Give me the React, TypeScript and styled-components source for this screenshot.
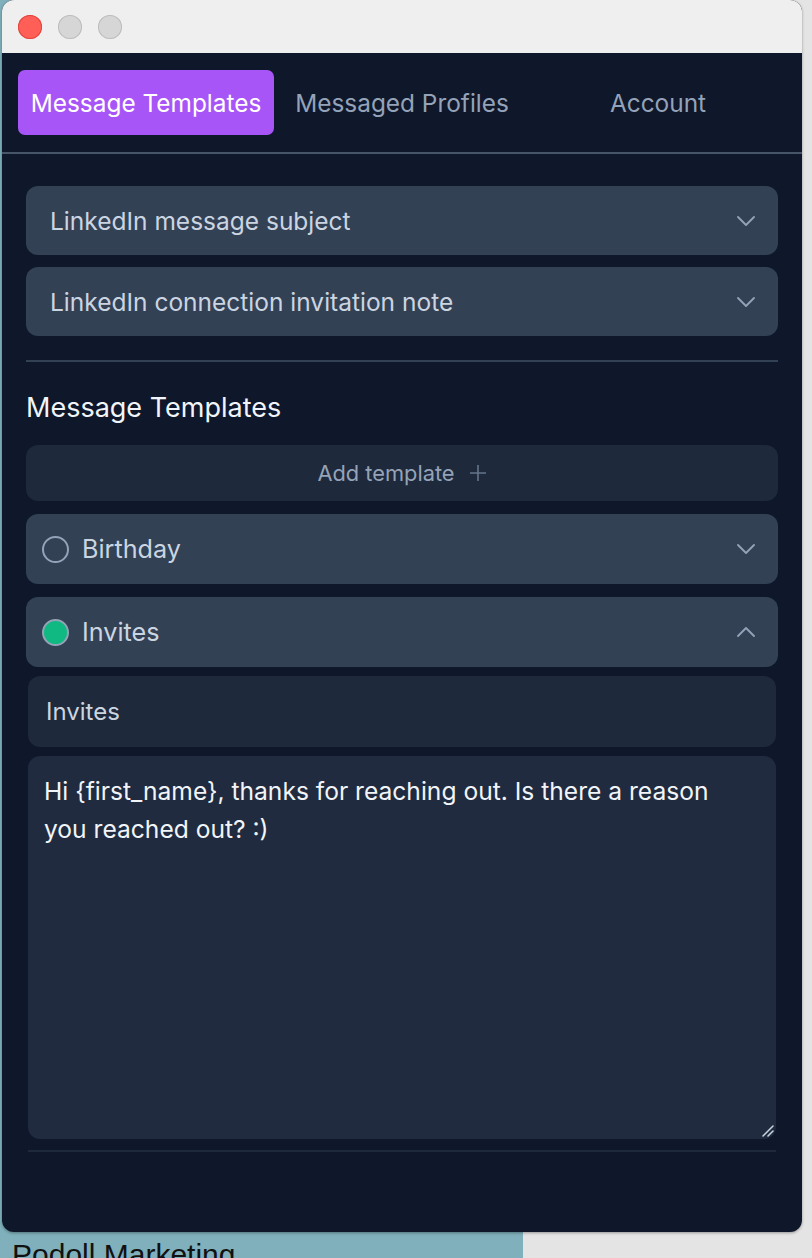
import React from "react";
import styled, { createGlobalStyle } from "styled-components";

const GlobalStyle = createGlobalStyle`
  html, body {
    margin: 0;
    padding: 0;
  }
  body {
    font-family: Inter, "Noto Sans", sans-serif;
    background: #e6e6e6;
  }
`;

const Desktop = styled.div`
  position: relative;
  width: 812px;
  height: 1258px;
  overflow: hidden;
  background: linear-gradient(
    to right,
    #7fb0bb 0,
    #7fb0bb 523px,
    #e4e4e4 523px,
    #e4e4e4 100%
  );
`;

const DesktopLabel = styled.div`
  position: absolute;
  left: 12px;
  top: 1238px;
  font-family: "Liberation Sans", Arial, sans-serif;
  font-size: 30px;
  line-height: 34px;
  color: #111;
  z-index: 0;
`;

const Window = styled.div`
  position: relative;
  z-index: 1;
  margin-left: 2px;
  width: 800px;
  height: 1232px;
  border-radius: 12px;
  overflow: hidden;
  background: #0f172a;
  display: flex;
  flex-direction: column;
  box-shadow: 0 1px 3px rgba(0, 0, 0, 0.35);
`;

const TitleBar = styled.div`
  height: 53px;
  flex-shrink: 0;
  background: #efefef;
  display: flex;
  align-items: center;
  gap: 16px;
  padding-left: 16px;
  box-sizing: border-box;
`;

const Light = styled.span<{ $color: string; $edge: string }>`
  width: 24px;
  height: 24px;
  border-radius: 50%;
  background: ${(p) => p.$color};
  box-shadow: inset 0 0 0 1px ${(p) => p.$edge};
`;

const TabBar = styled.div`
  display: grid;
  grid-template-columns: repeat(3, 1fr);
  padding: 17px 16px;
  border-bottom: 2px solid #475569;
`;

const Tab = styled.div<{ $active?: boolean }>`
  height: 65px;
  display: flex;
  align-items: center;
  justify-content: center;
  border-radius: 7px;
  font-size: 24.4px;
  background: ${(p) => (p.$active ? "#a855f7" : "transparent")};
  color: ${(p) => (p.$active ? "#ffffff" : "#94a3b8")};
`;

const Content = styled.div`
  padding: 32px 24px 0;
  display: flex;
  flex-direction: column;
`;

const Stack = styled.div<{ $gap: number; $top?: number }>`
  display: flex;
  flex-direction: column;
  gap: ${(p) => p.$gap}px;
  margin-top: ${(p) => p.$top ?? 0}px;
`;

const Card = styled.div`
  height: 69px;
  display: flex;
  align-items: center;
  justify-content: space-between;
  padding: 0 23px 0 24px;
  box-sizing: border-box;
  background: #334155;
  border-radius: 12px;
  color: #cbd5e1;
  font-size: 24.5px;
`;

const TemplateCard = styled(Card)`
  height: 70px;
  padding-left: 16px;
  font-size: 25.2px;
`;

const Divider = styled.div`
  height: 2px;
  background: #334155;
  margin-top: 24px;
`;

const Heading = styled.div`
  margin-top: 30px;
  font-size: 27px;
  line-height: 32px;
  color: #f1f5f9;
`;

const AddButton = styled.div`
  margin-top: 21px;
  height: 56px;
  display: flex;
  align-items: center;
  justify-content: center;
  gap: 14px;
  background: #1e293b;
  border-radius: 12px;
  color: #94a3b8;
  font-size: 21.8px;
`;

const Left = styled.div`
  display: flex;
  align-items: center;
  gap: 13px;
`;

const Radio = styled.span<{ $on?: boolean }>`
  width: 27px;
  height: 27px;
  border-radius: 50%;
  box-sizing: border-box;
  border: 2px solid #94a3b8;
  background: ${(p) => (p.$on ? "#10b981" : "transparent")};
`;

const Editor = styled.div`
  display: flex;
  flex-direction: column;
  gap: 9px;
  padding: 9px 2px 0;
`;

const TitleField = styled.div`
  height: 71px;
  display: flex;
  align-items: center;
  padding: 0 18px;
  background: #1e293b;
  border-radius: 12px;
  color: #cbd5e1;
  font-size: 24px;
`;

const BodyField = styled.div`
  position: relative;
  height: 383px;
  box-sizing: border-box;
  padding: 16px 44px 16px 16px;
  background: #212b3f;
  border-radius: 12px;
  color: #f1f5f9;
  font-size: 24.6px;
  line-height: 38px;
`;

const Grip = styled.svg`
  position: absolute;
  right: 2px;
  bottom: 2px;
`;

const EditorRule = styled.div`
  height: 2px;
  background: #1e293b;
  margin-top: 2px;
`;

const Chevron = ({ up }: { up?: boolean }) => (
  <svg width="18" height="10" viewBox="0 0 18 10" fill="none">
    <polyline
      points={up ? "1,9 9,1 17,9" : "1,1 9,9 17,1"}
      stroke="#94a3b8"
      strokeWidth="1.8"
      strokeLinecap="round"
      strokeLinejoin="round"
    />
  </svg>
);

const Plus = () => (
  <svg width="18" height="18" viewBox="0 0 18 18" fill="none">
    <path d="M9 1v16M1 9h16" stroke="#64748b" strokeWidth="1.6" />
  </svg>
);

const message =
  "Hi {first_name}, thanks for reaching out. Is there a reason you reached out? :)";

export default function App() {
  return (
    <Desktop>
      <GlobalStyle />
      <Window>
        <TitleBar>
          <Light $color="#ff5f57" $edge="#e0443e" />
          <Light $color="#d6d6d6" $edge="#bdbdbd" />
          <Light $color="#d6d6d6" $edge="#bdbdbd" />
        </TitleBar>
        <TabBar>
          <Tab $active>Message Templates</Tab>
          <Tab>Messaged Profiles</Tab>
          <Tab>Account</Tab>
        </TabBar>
        <Content>
          <Stack $gap={12}>
            <Card>
              <span>LinkedIn message subject</span>
              <Chevron />
            </Card>
            <Card>
              <span>LinkedIn connection invitation note</span>
              <Chevron />
            </Card>
          </Stack>
          <Divider />
          <Heading>Message Templates</Heading>
          <AddButton>
            <span>Add template</span>
            <Plus />
          </AddButton>
          <Stack $gap={13} $top={13}>
            <TemplateCard>
              <Left>
                <Radio />
                <span>Birthday</span>
              </Left>
              <Chevron />
            </TemplateCard>
            <TemplateCard>
              <Left>
                <Radio $on />
                <span>Invites</span>
              </Left>
              <Chevron up />
            </TemplateCard>
          </Stack>
          <Editor>
            <TitleField>Invites</TitleField>
            <BodyField>
              {message}
              <Grip width="14" height="14" viewBox="0 0 14 14">
                <path
                  d="M13 3L3 13M13 8L8 13"
                  stroke="#cbd5e1"
                  strokeWidth="1.5"
                  strokeLinecap="round"
                />
              </Grip>
            </BodyField>
            <EditorRule />
          </Editor>
        </Content>
      </Window>
      <DesktopLabel>Podoll Marketing</DesktopLabel>
    </Desktop>
  );
}
